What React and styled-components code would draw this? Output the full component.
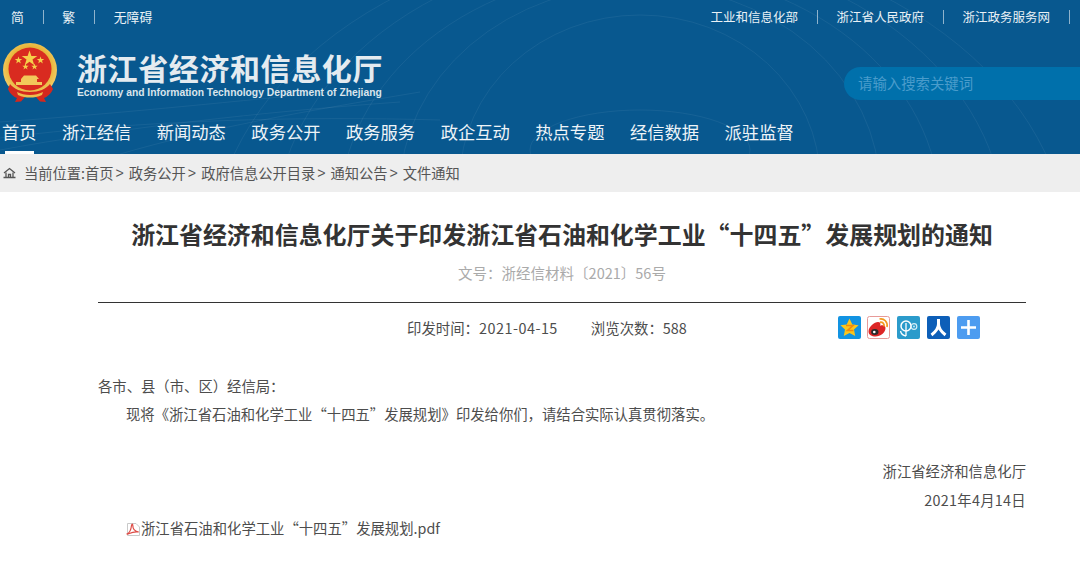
import React from "react";
import styled, { createGlobalStyle } from "styled-components";

const FONT = `"Noto Sans CJK SC", "Liberation Sans", sans-serif`;

const GlobalStyle = createGlobalStyle`
  html, body {
    margin: 0;
    padding: 0;
    background: #fff;
    font-family: ${FONT};
    overflow: hidden;
  }
  * { box-sizing: border-box; }
`;

const Emblem = () => (
  <svg width="56" height="60" viewBox="0 0 56 60">
    <defs>
      <radialGradient id="gold" cx="50%" cy="45%" r="55%">
        <stop offset="70%" stopColor="#e8b53a" />
        <stop offset="100%" stopColor="#f3cf6a" />
      </radialGradient>
    </defs>
    <circle cx="28" cy="27" r="27" fill="url(#gold)" />
    <circle cx="28" cy="26" r="21.500" fill="#d92b20" />
    <g transform="translate(-1.500 -1.500)" fill="#f6cf4a">
      <path d="M29 9l1.900 5.600h5.900l-4.800 3.500 1.800 5.600-4.800-3.400-4.800 3.400 1.800-5.600-4.800-3.500h5.900z" />
      <path d="M18 15l.9 2.600h2.800l-2.200 1.600.8 2.700-2.300-1.600-2.300 1.600.8-2.700-2.200-1.600h2.800zM40 15l.9 2.600h2.800l-2.200 1.600.8 2.700-2.300-1.600-2.300 1.600.8-2.700-2.200-1.600h2.800zM25 22l.8 2.300h2.400l-1.900 1.400.7 2.300-2-1.400-2 1.400.7-2.300-1.900-1.400h2.400zM34 22l.8 2.300h2.400l-1.900 1.400.7 2.300-2-1.400-2 1.400.7-2.300-1.900-1.400h2.400z" />
    </g>
    <path d="M19 36l3-3.400h12l3 3.400h-2v3h5v3H14v-3h5v-3z" fill="#f2c85a" />
    <path d="M8 41c4 5 11 8 20 8s16-3 20-8l3 5c-2 5-6 8-9 9l2 4-6-.5-4-4.500H23l-4 4.500-6 .5 2-4c-3-1-7-4-9-9z" fill="#d4281e" />
    <path d="M15 49c4 2 8 3 13 3s9-1 13-3l-1 3c-4 2-8 2.500-12 2.500s-8-.5-12-2.500z" fill="#eebd4c" />
  </svg>
);

const HeaderLines = () => (
  <LinesSvg viewBox="0 0 1080 154" preserveAspectRatio="none">
    <g fill="none" stroke="#ffffff" strokeOpacity="0.06">
      <ellipse cx="640" cy="180" rx="180" ry="165" />
      <ellipse cx="640" cy="190" rx="240" ry="205" />
      <ellipse cx="640" cy="210" rx="300" ry="240" />
      <ellipse cx="640" cy="230" rx="365" ry="280" />
      <ellipse cx="640" cy="260" rx="430" ry="320" />
      <ellipse cx="640" cy="150" rx="110" ry="40" />
      <path d="M0 150C120 128 260 112 400 102M0 122C110 114 210 104 330 92M0 138C140 120 300 116 440 120M120 154C210 128 300 112 420 92" />
    </g>
  </LinesSvg>
);

const HomeIcon = () => (
  <svg width="13" height="12" viewBox="0 0 13 12" fill="none" stroke="#555" strokeWidth="1.300">
    <path d="M1 6l5.500-4.500L12 6" />
    <path d="M3 5.500V10M10 5.500V10M.5 10.500h12" />
    <path d="M5.500 10V7.500h2V10" />
  </svg>
);

const PdfIcon = () => (
  <svg width="15" height="17" viewBox="0 0 15 17">
    <path d="M1.500 3.500h8.500l3.500 3.500v8.500h-12z" fill="#fff" stroke="#c9c9c9" />
    <path d="M1 14c2.500-1 4-4 4.500-8.500.3-2 1.300-2 1.300 0 0 3 2 6 6 6.500-3.500-.5-7.500.5-9.500 1.500-1 .5-2 1-2.300.5z" fill="none" stroke="#dd4b45" strokeWidth="1.200" />
  </svg>
);

const QzoneIcon = () => (
  <svg viewBox="0 0 23 23" width="23" height="23">
    <rect width="23" height="23" rx="2" fill="#1293e2" />
    <path d="M11.500 2.500l2.800 5.900 6.300.8-4.600 4.400 1.200 6.400-5.700-3.100-5.700 3.100 1.200-6.400-4.600-4.400 6.300-.8z" fill="#fbc61d" />
    <path d="M8 9.500h7l-5.500 5h6" fill="none" stroke="#f08a10" strokeWidth="1.600" />
  </svg>
);

const WeiboIcon = () => (
  <svg viewBox="0 0 23 23" width="23" height="23">
    <rect x=".5" y=".5" width="22" height="22" rx="2" fill="#fff" stroke="#e79a98" />
    <path d="M1.500 15.500c0-4.500 6-9.500 9.500-9.500 2.300 0 2.800 1.700 2.200 3.800 2.300-.9 5.300-.6 5.300 2.200 0 4.500-5 8.500-10 8.500-3.800 0-7-1.700-7-5z" fill="#dc2626" />
    <ellipse cx="7.800" cy="16" rx="3.700" ry="2.900" fill="#2a2a2a" />
    <circle cx="7.300" cy="16" r="1.300" fill="#fff" />
    <path d="M12.500 3c4.500-1 8.500 3 7.500 8M13 6.300c2.500-.5 4.500 1.500 4 4.200" fill="none" stroke="#f39a1e" strokeWidth="1.700" />
  </svg>
);

const PengyouIcon = () => (
  <svg viewBox="0 0 23 23" width="23" height="23">
    <rect width="23" height="23" rx="2" fill="#2b9bcb" />
    <circle cx="9" cy="10" r="5" fill="none" stroke="#fff" strokeWidth="1.500" />
    <path d="M9 7v13M9 20c-3-.5-5-2.500-5.500-5" fill="none" stroke="#fff" strokeWidth="1.300" />
    <circle cx="17" cy="10.500" r="2.800" fill="none" stroke="#d5eef7" strokeWidth="1.200" />
    <circle cx="17" cy="10.500" r=".9" fill="#d5eef7" />
  </svg>
);

const RenrenIcon = () => (
  <svg viewBox="0 0 23 23" width="23" height="23">
    <rect width="23" height="23" rx="2" fill="#0d5fb8" />
    <path d="M11.500 3v5c0 4-2.500 7.500-7 11M11.500 8c0 4 2.500 7.500 7 11" fill="none" stroke="#fff" strokeWidth="3" />
  </svg>
);

const PlusIcon = () => (
  <svg viewBox="0 0 23 23" width="23" height="23">
    <rect width="23" height="23" rx="2" fill="#4d9cf0" />
    <path d="M11.500 4v15M4 11.500h15" stroke="#fff" strokeWidth="2.600" />
  </svg>
);

const navItems = ["首页", "浙江经信", "新闻动态", "政务公开", "政务服务", "政企互动", "热点专题", "经信数据", "派驻监督"];
const crumbs = ["政务公开", "政府信息公开目录", "通知公告"];

export default function App() {
  return (
    <>
      <GlobalStyle />
      <Header>
        <HeaderLines />
        <TopBar>
          <TopGroup>
            <TopLink $size={12.85}>简</TopLink>
            <TopLink $size={12.85}>繁</TopLink>
            <TopLink $size={12.85} $last>无障碍</TopLink>
          </TopGroup>
          <TopGroup>
            <TopLink>工业和信息化部</TopLink>
            <TopLink>浙江省人民政府</TopLink>
            <TopLink>浙江政务服务网</TopLink>
          </TopGroup>
        </TopBar>
        <BrandRow>
          <Brand>
            <Emblem />
            <BrandText>
              <BrandName>浙江省经济和信息化厅</BrandName>
              <BrandEnglish>Economy and Information Technology Department of Zhejiang</BrandEnglish>
            </BrandText>
          </Brand>
          <SearchInput placeholder="请输入搜索关键词" readOnly />
        </BrandRow>
        <Nav>
          {navItems.map((item, i) => (
            <NavItem key={item} $active={i === 0}>{item}</NavItem>
          ))}
        </Nav>
      </Header>
      <Breadcrumb>
        <HomeIcon />
        <CrumbText>当前位置:首页</CrumbText>
        <Sep>&gt;</Sep>
        {crumbs.map((c) => (
          <React.Fragment key={c}>
            <CrumbText>{c}</CrumbText>
            <Sep>&gt;</Sep>
          </React.Fragment>
        ))}
        <CrumbText>文件通知</CrumbText>
      </Breadcrumb>
      <Article>
        <Title>浙江省经济和信息化厅关于印发浙江省石油和化学工业“十四五”发展规划的通知</Title>
        <DocNo>文号：浙经信材料〔2021〕56号</DocNo>
        <Meta>
          <MetaInfo>
            <span>印发时间：<MetaDate>2021-04-15</MetaDate></span>
            <span>浏览次数：588</span>
          </MetaInfo>
          <Share>
            <QzoneIcon />
            <WeiboIcon />
            <PengyouIcon />
            <RenrenIcon />
            <PlusIcon />
          </Share>
        </Meta>
        <Body>
          <Para>各市、县（市、区）经信局：</Para>
          <Para $indent>现将《浙江省石油和化学工业“十四五”发展规划》印发给你们，请结合实际认真贯彻落实。</Para>
          <Para>&nbsp;</Para>
          <Para $right>浙江省经济和信息化厅</Para>
          <Para $right $track>2021年4月14日</Para>
          <Attachment>
            <PdfIcon />
            <span>浙江省石油和化学工业“十四五”发展规划.pdf</span>
          </Attachment>
        </Body>
      </Article>
    </>
  );
}

const Header = styled.header`
  position: relative;
  height: 154px;
  background: #08588f;
  color: #fff;
  overflow: hidden;
`;

const LinesSvg = styled.svg`
  position: absolute;
  inset: 0;
  width: 100%;
  height: 100%;
  pointer-events: none;
`;

const TopBar = styled.div`
  position: relative;
  display: flex;
  justify-content: space-between;
  height: 33px;
  align-items: center;
  padding: 0 10px 0 11px;
`;

const TopGroup = styled.div`
  display: flex;
  align-items: center;
`;

const TopLink = styled.a`
  font-size: ${(p) => p.$size || 12.5}px;
  line-height: 14px;
  color: #e9f1f6;
  white-space: nowrap;
  padding-right: 19px;
  margin-right: 18.500px;
  border-right: ${(p) => (p.$last ? "none" : "1px solid rgba(255,255,255,.55)")};

  &:last-child {
    margin-right: 0;
  }
`;

const BrandRow = styled.div`
  position: relative;
  display: flex;
  justify-content: space-between;
  height: 60px;
  margin-top: 10px;
  padding-left: 2px;
`;

const Brand = styled.div`
  display: flex;
  align-items: flex-start;
  gap: 19px;
`;

const BrandText = styled.div`
  display: flex;
  flex-direction: column;
  gap: 2.500px;
  padding-top: 8px;
`;

const BrandName = styled.div`
  font-size: 30px;
  line-height: 32px;
  font-weight: 700;
  letter-spacing: 0.6px;
  color: #e4ebf0;
  white-space: nowrap;
`;

const BrandEnglish = styled.div`
  font-family: "Liberation Sans", sans-serif;
  font-size: 10.300px;
  line-height: 13px;
  font-weight: 700;
  color: #dbe5ec;
  white-space: nowrap;
`;

const SearchInput = styled.input`
  align-self: flex-end;
  width: 236px;
  height: 33px;
  margin-bottom: 3px;
  padding: 0 0 2px 14px;
  border: none;
  outline: none;
  border-radius: 17px 0 0 17px;
  background: #0070ab;
  font-family: ${FONT};
  font-size: 14.400px;

  &::placeholder {
    color: #4a9ccb;
    opacity: 1;
  }
`;

const Nav = styled.nav`
  position: relative;
  display: flex;
  gap: 25.500px;
  height: 34px;
  margin-top: 17px;
  padding-left: 2px;
  align-items: flex-start;
`;

const NavItem = styled.a`
  position: relative;
  display: block;
  height: 34px;
  font-size: 17.300px;
  line-height: 24px;
  color: #eef4f8;
  white-space: nowrap;

  ${(p) =>
    p.$active &&
    `
    &::after {
      content: "";
      position: absolute;
      left: 3px;
      right: 3px;
      bottom: 0;
      height: 3px;
      background: #fff;
    }
  `}
`;

const Breadcrumb = styled.div`
  display: flex;
  align-items: center;
  height: 38px;
  padding: 0 0 1px 3px;
  background: #eeeeee;
  font-size: 14.250px;
  color: #555;

  svg {
    margin-right: 8px;
  }
`;

const CrumbText = styled.span`
  white-space: nowrap;
`;

const Sep = styled.span`
  margin: 0 5px 0 2px;
  font-family: "Liberation Sans", sans-serif;
`;

const Article = styled.main`
  padding: 0 54px 0 98px;
`;

const Title = styled.h1`
  margin: 0;
  padding-top: 27px;
  font-size: 23.950px;
  line-height: 30px;
  font-weight: 700;
  color: #333;
  text-align: center;
  white-space: nowrap;
`;

const DocNo = styled.div`
  margin-top: 12px;
  height: 41px;
  font-size: 14.500px;
  line-height: 24px;
  color: #aaa;
  text-align: center;
`;

const Meta = styled.div`
  display: flex;
  align-items: center;
  height: 50px;
  border-top: 1px solid #333;
`;

const MetaInfo = styled.div`
  display: flex;
  gap: 33px;
  margin-left: 309px;
  font-size: 14.400px;
  color: #4d4d4d;
`;

const MetaDate = styled.span`
  letter-spacing: 0.5px;
`;

const Share = styled.div`
  display: flex;
  gap: 6.700px;
  margin-left: 151px;
`;

const Body = styled.div`
  margin-top: 19.500px;
  font-size: 14.350px;
  line-height: 28.600px;
  color: #4d4d4d;
`;

const Para = styled.p`
  margin: 0;
  padding-left: ${(p) => (p.$indent ? "28px" : "0")};
  text-align: ${(p) => (p.$right ? "right" : "left")};
  letter-spacing: ${(p) => (p.$track ? "0.3px" : "normal")};
`;

const Attachment = styled.div`
  display: flex;
  align-items: center;
  padding-left: 28px;
`;
